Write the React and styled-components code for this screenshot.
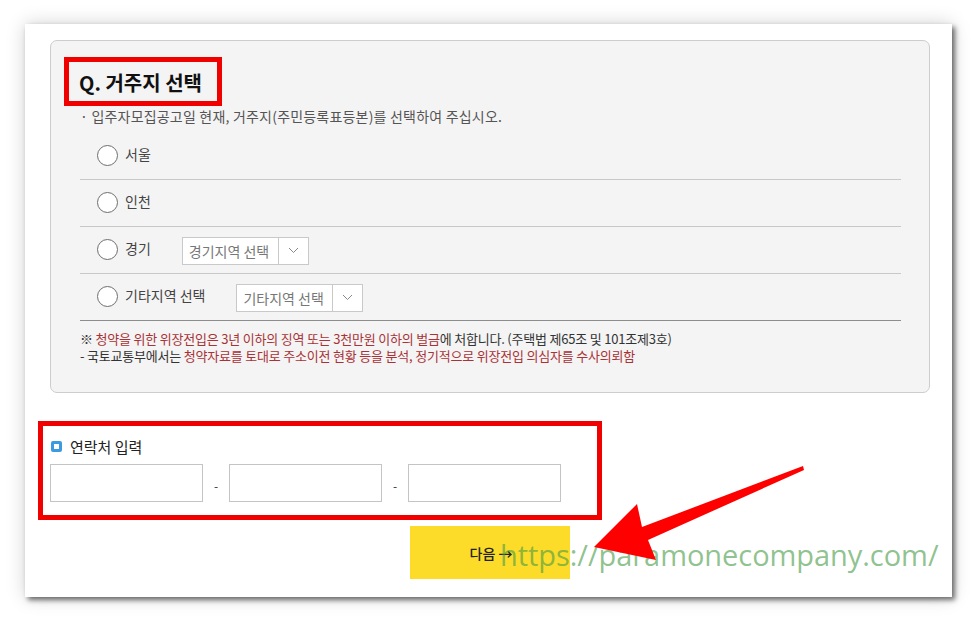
import React from "react";
import styled, { createGlobalStyle } from "styled-components";

const Global = createGlobalStyle`
  html, body { margin: 0; padding: 0; background: #fff; }
  body { font-family: "Noto Sans CJK KR", "Noto Sans", sans-serif; color: #333; }
  * { box-sizing: border-box; }
`;

const Page = styled.div`
  position: relative;
  width: 977px;
  height: 623px;
  padding: 24px 25px;
  overflow: hidden;
`;

const Card = styled.div`
  width: 927px;
  height: 573px;
  background: #fff;
  box-shadow: 3px 3px 5px rgba(0, 0, 0, 0.55), 0 0 18px rgba(0, 0, 0, 0.18);
  padding: 16px 0 0 0;
  display: flex;
  flex-direction: column;
`;

const Panel = styled.section`
  margin-left: 25px;
  width: 880px;
  height: 353px;
  background: #f4f4f4;
  border: 1px solid #cdcdcd;
  border-radius: 7px;
  padding: 16px 28px 0 13px;
  display: flex;
  flex-direction: column;
`;

const TitleBox = styled.div`
  align-self: flex-start;
  width: 158px;
  height: 49px;
  border: 5px solid #f10000;
  padding: 0 0 0 10px;
  display: flex;
  align-items: center;
`;

const Title = styled.h2`
  margin: 0;
  font-size: 20px;
  font-weight: 700;
  color: #111;
  letter-spacing: 0;
  line-height: 1;
  padding-top: 3px;
`;

const Sub = styled.p`
  margin: 0 0 0 16px;
  font-size: 14px;
  line-height: 20px;
  color: #555;
  letter-spacing: 0.2px;
`;

const Options = styled.ul`
  list-style: none;
  margin: 7px 0 0 16px;
  padding: 0;
`;

const Option = styled.li`
  height: 47px;
  display: flex;
  align-items: center;
  padding-left: 17px;
  border-bottom: 1px solid ${(p) => (p.$last ? "#8d8d8d" : "#c8c8c8")};
`;

const Radio = styled.span`
  width: 21px;
  height: 21px;
  border-radius: 50%;
  border: 1px solid #6e6e6e;
  background: #fff;
  flex: none;
  margin-right: 7px;
  margin-top: -2px;
`;

const Label = styled.span`
  font-size: 14px;
  color: #444;
  margin-right: 31px;
  margin-top: -4px;
`;

const Select = styled.div`
  display: flex;
  width: 127px;
  height: 28px;
  border: 1px solid #c9c9c9;
  background: #fff;
  margin-top: 1px;
`;

const SelectText = styled.span`
  width: 96px;
  border-right: 1px solid #c9c9c9;
  font-size: 14px;
  color: #777;
  display: flex;
  align-items: center;
  padding-left: 6px;
  white-space: nowrap;
`;

const SelectArrow = styled.span`
  flex: 1;
  display: flex;
  align-items: center;
  justify-content: center;
`;

const Notes = styled.div`
  margin: 9px 0 0 16px;
  font-size: 13px;
  line-height: 17px;
  color: #333;
  letter-spacing: -0.2px;
  white-space: nowrap;
`;

const Red = styled.span`
  color: #a93236;
`;

const ContactBox = styled.div`
  margin: 28px 0 0 13px;
  width: 564px;
  height: 99px;
  border: 5px solid #f10000;
  padding: 10px 7px 0 7px;
  display: flex;
  flex-direction: column;
  gap: 8px;
`;

const ContactLabel = styled.div`
  display: flex;
  align-items: center;
  gap: 8px;
  font-size: 15px;
  font-weight: 400;
  color: #222;
  height: 20px;
  padding-left: 1px;
`;

const Bullet = styled.span`
  width: 11px;
  height: 11px;
  border: 3px solid #3b9be0;
  border-radius: 2px;
  background: #fff;
`;

const Inputs = styled.div`
  display: flex;
  align-items: center;
`;

const Input = styled.div`
  width: 153px;
  height: 38px;
  border: 1px solid #c4c4c4;
  background: #fff;
`;

const Dash = styled.span`
  width: 26px;
  text-align: center;
  font-size: 12px;
  color: #333;
  padding-top: 4px;
`;

const NextButton = styled.button`
  margin: 6px 0 0 385px;
  width: 160px;
  height: 53px;
  border: none;
  background: #fcdb29;
  font-family: "Noto Sans CJK KR", sans-serif;
  font-size: 14px;
  font-weight: 500;
  color: #222;
  padding: 0 0 0 2px;
  display: flex;
  align-items: center;
  justify-content: center;
  gap: 3px;
`;

const Watermark = styled.div`
  position: absolute;
  left: 500px;
  top: 540px;
  font-family: "Open Sans", sans-serif;
  font-size: 29px;
  line-height: 30px;
  color: rgba(70, 155, 70, 0.62);
  letter-spacing: -0.05px;
  white-space: nowrap;
`;

const Overlay = styled.svg`
  position: absolute;
  left: 0;
  top: 0;
  pointer-events: none;
`;

const Chevron = () => (
  <svg width="11" height="7" viewBox="0 0 11 7">
    <path d="M1 1l4.5 4.5L10 1" fill="none" stroke="#888" strokeWidth="1" />
  </svg>
);

const options = [
  { label: "서울" },
  { label: "인천" },
  { label: "경기", select: "경기지역 선택" },
  { label: "기타지역 선택", select: "기타지역 선택" },
];

export default function App() {
  return (
    <Page>
      <Global />
      <Card>
        <Panel>
          <TitleBox>
            <Title>Q. 거주지 선택</Title>
          </TitleBox>
          <Sub>· 입주자모집공고일 현재, 거주지(주민등록표등본)를 선택하여 주십시오.</Sub>
          <Options>
            {options.map((o, i) => (
              <Option key={o.label} $last={i === options.length - 1}>
                <Radio />
                <Label>{o.label}</Label>
                {o.select && (
                  <Select>
                    <SelectText>{o.select}</SelectText>
                    <SelectArrow>
                      <Chevron />
                    </SelectArrow>
                  </Select>
                )}
              </Option>
            ))}
          </Options>
          <Notes>
            <div>
              ※ <Red>청약을 위한 위장전입은 3년 이하의 징역 또는 3천만원 이하의 벌금</Red>에 처합니다. (주택법 제65조 및 101조제3호)
            </div>
            <div>
              - 국토교통부에서는 <Red>청약자료를 토대로 주소이전 현황 등을 분석, 정기적으로 위장전입 의심자를 수사의뢰함</Red>
            </div>
          </Notes>
        </Panel>
        <ContactBox>
          <ContactLabel>
            <Bullet />
            연락처 입력
          </ContactLabel>
          <Inputs>
            <Input />
            <Dash>-</Dash>
            <Input />
            <Dash>-</Dash>
            <Input />
          </Inputs>
        </ContactBox>
        <NextButton>
          다음 <span>→</span>
        </NextButton>
      </Card>
      <Watermark>https://paramonecompany.com/</Watermark>
      <Overlay width="977" height="623" viewBox="0 0 977 623">
        <polygon
          points="803,466 642,527 637,504 594,547 656,560 648,540 804,470"
          fill="#ff0000"
        />
      </Overlay>
    </Page>
  );
}
